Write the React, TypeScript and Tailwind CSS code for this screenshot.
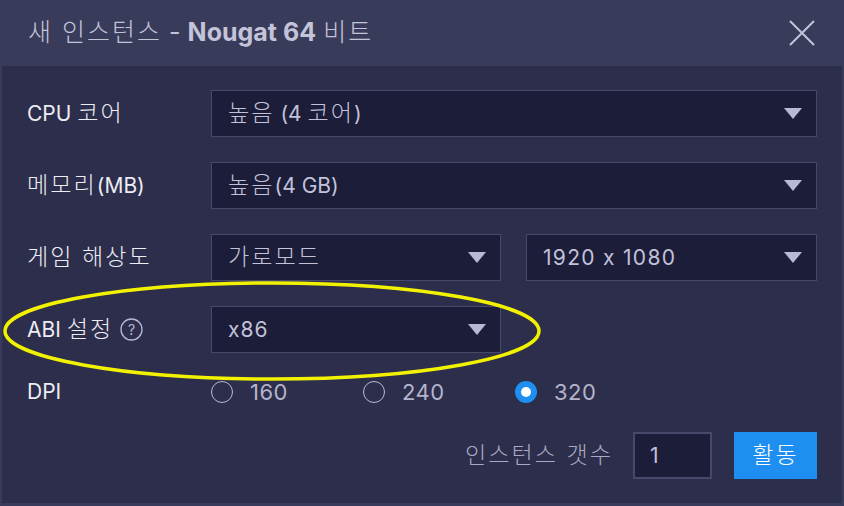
const font = { fontFamily: 'Inter, "Noto Sans CJK KR", sans-serif' };

// Korean runs in the reference are spaced out, light and a touch larger than the Latin
const K = ({ children, big = true }: { children: React.ReactNode; big?: boolean }) => (
  <span className={`tracking-[2px] font-light ${big ? "text-[1.1em]" : ""}`}>{children}</span>
);

const Arrow = () => (
  <svg width="18" height="12" viewBox="0 0 18 12" className="shrink-0">
    <path d="M0 0 H18 L9 11 Z" fill="#b9b9d3" />
  </svg>
);

const Select = ({ children, className = "" }: { children: React.ReactNode; className?: string }) => (
  <div
    className={`h-[47px] flex items-center justify-between pl-[16px] pr-[14px] bg-[#1c1d39] border border-[#47496c] text-[21px] text-[#c2c2da] ${className}`}
  >
    <span>{children}</span>
    <Arrow />
  </div>
);

const Radio = ({ label, checked = false }: { label: string; checked?: boolean }) => (
  <div className="flex items-center gap-[17px] w-[152px]">
    {checked ? (
      <span className="w-[22px] h-[22px] rounded-full bg-[#1e8ff0] flex items-center justify-center">
        <span className="w-[10px] h-[10px] rounded-full bg-white" />
      </span>
    ) : (
      <span className="w-[22px] h-[22px] rounded-full border-[1.5px] border-[#b9b9d3]" />
    )}
    <span className="text-[22px] tracking-[0.5px] text-[#b4b4cc]">{label}</span>
  </div>
);

const Label = ({ children }: { children: React.ReactNode }) => (
  <div className="w-[184px] shrink-0 text-[21px] text-[#ececf4] flex items-center">{children}</div>
);

export default function App() {
  return (
    <div
      style={font}
      className="relative w-[844px] h-[506px] bg-[#393b5a] flex flex-col overflow-hidden [font-feature-settings:'calt'_0]"
    >
      {/* Header */}
      <div className="h-[66px] shrink-0 flex items-center justify-between pl-[28px] pr-[28px]">
        <div className="text-[25px] text-[#c3c3d9]">
          <K big={false}>새 인스턴스</K> - <span className="font-bold">Nougat 64</span> <K big={false}>비트</K>
        </div>
        <svg width="28" height="28" viewBox="0 0 28 28">
          <path d="M2 2 L26 26 M26 2 L2 26" stroke="#c3c3d9" strokeWidth="2" />
        </svg>
      </div>

      {/* Body */}
      <div className="flex-1 mx-[2px] mb-[3px] bg-[#2c2e4b] pt-[24px] pl-[25px] pr-[25px] flex flex-col">
        <div className="flex items-center h-[47px]">
          <Label>
            CPU&nbsp;<K>코어</K>
          </Label>
          <Select className="flex-1">
            <K>높음</K> (4 <K>코어</K>)
          </Select>
        </div>
        <div className="flex items-center h-[47px] mt-[25px]">
          <Label>
            <K>메모리</K>(MB)
          </Label>
          <Select className="flex-1">
            <K>높음</K>(4 GB)
          </Select>
        </div>
        <div className="flex items-center h-[47px] mt-[25px]">
          <Label>
            <K>게임 해상도</K>
          </Label>
          <div className="flex gap-[25px]">
            <Select className="w-[290px]">
              <K>가로모드</K>
            </Select>
            <Select className="w-[291px]">
              <span className="tracking-[1.3px]">1920 x 1080</span>
            </Select>
          </div>
        </div>
        <div className="flex items-center h-[47px] mt-[25px]">
          <Label>
            ABI&nbsp;<K>설정</K>
            <svg width="23" height="23" viewBox="0 0 23 23" className="ml-[7px]">
              <circle cx="11.5" cy="11.5" r="10.5" fill="none" stroke="#b9b9d3" strokeWidth="1.3" />
              <text x="11.5" y="16.5" textAnchor="middle" fontSize="14" fill="#b9b9d3" style={font}>
                ?
              </text>
            </svg>
          </Label>
          <Select className="w-[290px]">
            <span className="tracking-[1px]">x86</span>
          </Select>
        </div>
        <div className="flex items-center h-[22px] mt-[28px]">
          <Label>DPI</Label>
          <Radio label="160" />
          <Radio label="240" />
          <Radio label="320" checked />
        </div>
        <div className="flex items-center justify-end h-[47px] mt-[29px]">
          <span className="text-[21px] text-[#a9a9c3] mr-[20px]">
            <K>인스턴스 갯수</K>
          </span>
          <div className="w-[79px] h-[47px] bg-[#1c1d39] border-2 border-[#47496c] flex items-center pl-[15px] text-[21px] text-[#c2c2da]">
            1
          </div>
          <button className="w-[83px] h-[47px] bg-[#1e8ff0] text-white text-[21px] ml-[22px]">
            <K>활동</K>
          </button>
        </div>
      </div>

      {/* Annotation ellipse */}
      <svg className="absolute left-0 top-0 pointer-events-none" width="844" height="506">
        <ellipse cx="272" cy="331" rx="267" ry="48" fill="none" stroke="#f2f200" strokeWidth="3.5" />
      </svg>
    </div>
  );
}
